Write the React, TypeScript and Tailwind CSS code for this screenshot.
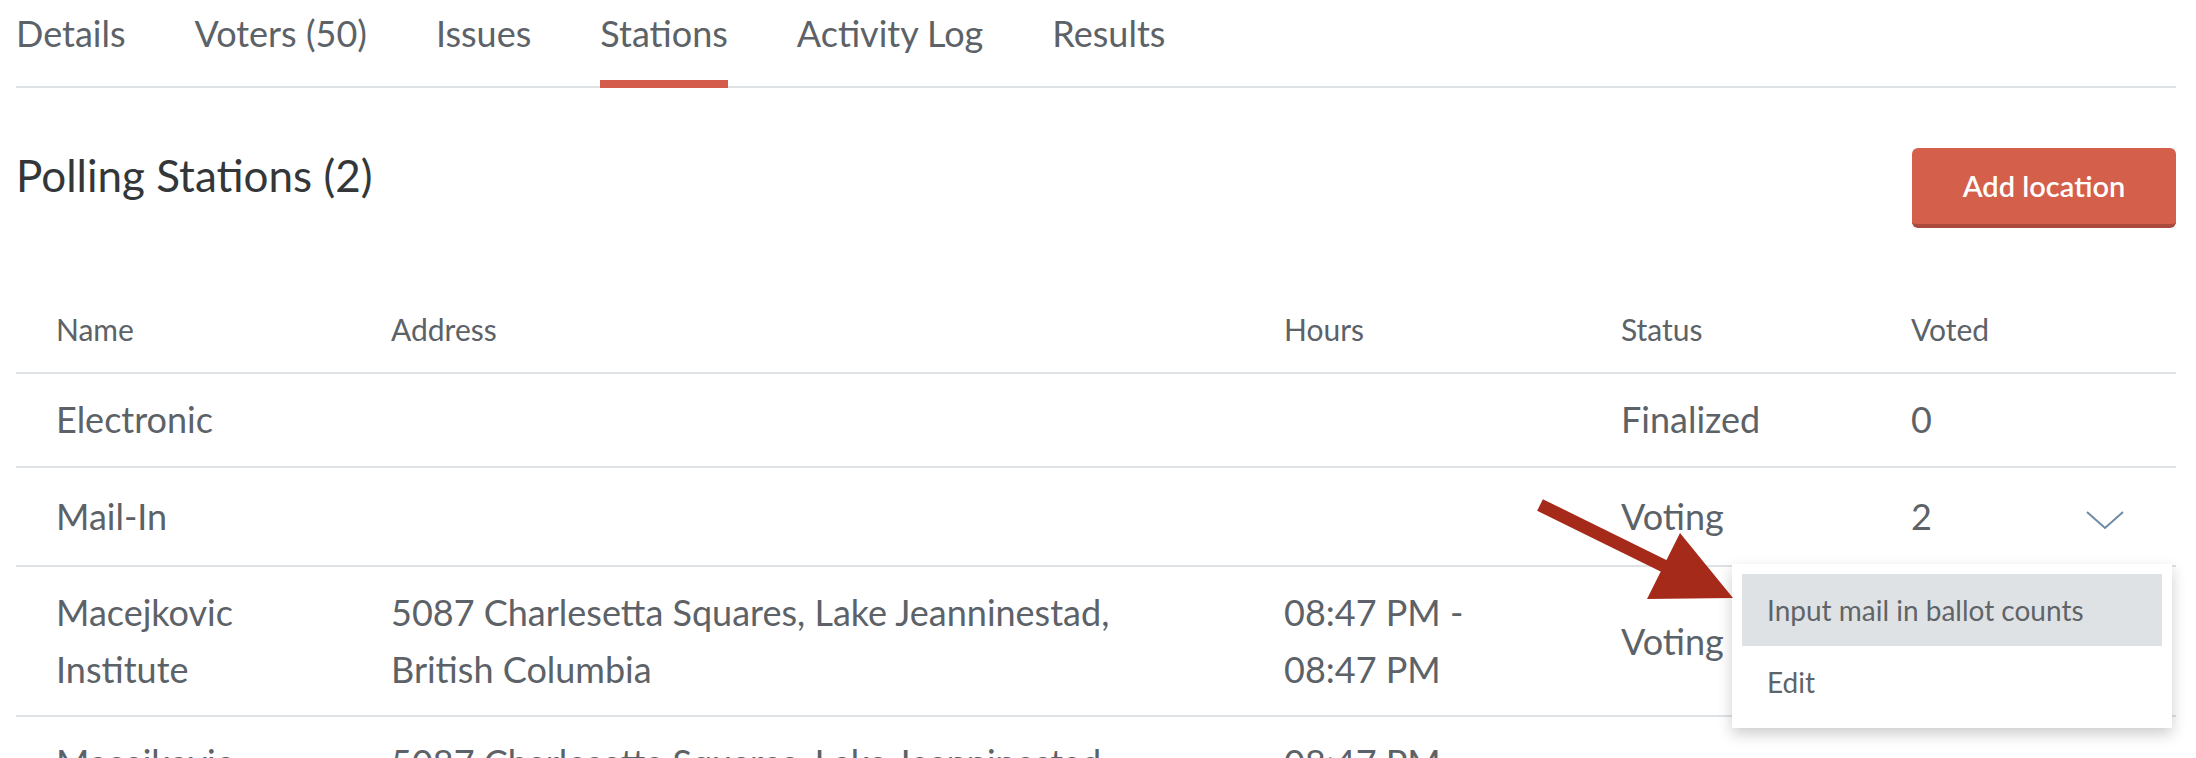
const tabs = [
  { label: "Details" },
  { label: "Voters (50)" },
  { label: "Issues" },
  { label: "Stations", active: true },
  { label: "Activity Log" },
  { label: "Results" },
];

const gridCols = "grid grid-cols-[375px_893px_337px_290px_1fr]";

export default function App() {
  return (
    <div className="relative h-[758px] w-[2196px] overflow-hidden bg-white pl-[16px] pr-[20px] font-['Lato',sans-serif] text-[#5c6267]">
      <nav className="flex gap-[69px] border-b-2 border-[#dee2e5]">
        {tabs.map((tab) => (
          <button
            key={tab.label}
            type="button"
            className={
              "-mb-[2px] border-b-8 pt-[8px] pb-[22px] text-[36px] leading-[50px] " +
              (tab.active ? "border-[#d35d4a]" : "border-transparent")
            }
          >
            {tab.label}
          </button>
        ))}
      </nav>

      <div className="flex items-start justify-between pt-[60px]">
        <h1 className="text-[44px] leading-[54px] text-[#343739]">Polling Stations (2)</h1>
        <button
          type="button"
          className="h-[80px] w-[264px] rounded-[6px] border-b-4 border-[#a94a3c] bg-[#d45f4b] text-[29px] font-semibold text-white"
        >
          Add location
        </button>
      </div>

      <div className="mt-[77px] text-[36px] leading-[57px]">
        <div className={`${gridCols} border-b-2 border-[#dfe2e5] pb-[19px] text-[30px] leading-[48px]`}>
          <div className="pl-[40px]">Name</div>
          <div>Address</div>
          <div>Hours</div>
          <div>Status</div>
          <div>Voted</div>
        </div>

        <div className={`${gridCols} border-b-2 border-[#dfe2e5] pt-[17px] pb-[18px]`}>
          <div className="pl-[40px]">Electronic</div>
          <div />
          <div />
          <div>Finalized</div>
          <div>0</div>
        </div>

        <div className={`${gridCols} relative border-b-2 border-[#dfe2e5] py-[20px]`}>
          <div className="pl-[40px]">Mail-In</div>
          <div />
          <div />
          <div>Voting</div>
          <div className="flex items-center justify-between pr-[52px]">
            <span>2</span>
            <svg width="38" height="20" viewBox="0 0 38 20" fill="none" className="mt-[6px]">
              <polyline points="1,2 19,18 37,2" stroke="#6e8aa5" strokeWidth="2" />
            </svg>
          </div>

          <div className="absolute top-full right-[4px] z-10 -mt-[1px] w-[440px] bg-white p-[10px] text-[28px] leading-[40px] text-[#5f6468] shadow-[0_6px_14px_rgba(0,0,0,0.2)]">
            <div className="flex h-[72px] items-center bg-[#dfe2e5] px-[25px]">Input mail in ballot counts</div>
            <div className="flex h-[72px] items-center px-[25px]">Edit</div>
          </div>
        </div>

        <div className={`${gridCols} items-center border-b-2 border-[#dfe2e5] py-[17px]`}>
          <div className="max-w-[260px] pl-[40px]">Macejkovic Institute</div>
          <div>
            5087 Charlesetta Squares, Lake Jeanninestad,
            <br />
            British Columbia
          </div>
          <div>
            08:47 PM -
            <br />
            08:47 PM
          </div>
          <div>Voting</div>
          <div />
        </div>

        <div className={`${gridCols} items-center py-[17px]`}>
          <div className="max-w-[260px] pl-[40px]">Macejkovic Institute</div>
          <div>
            5087 Charlesetta Squares, Lake Jeanninestad,
            <br />
            British Columbia
          </div>
          <div>
            08:47 PM -
            <br />
            08:47 PM
          </div>
          <div>Awaiting</div>
          <div>0</div>
        </div>
      </div>

      <svg className="pointer-events-none absolute inset-0 z-20" width="2196" height="758" viewBox="0 0 2196 758">
        <line x1="1540" y1="505" x2="1668" y2="568" stroke="#a52a1a" strokeWidth="13" />
        <polygon points="1680,533 1647,599 1733,598" fill="#a52a1a" />
      </svg>
    </div>
  );
}
